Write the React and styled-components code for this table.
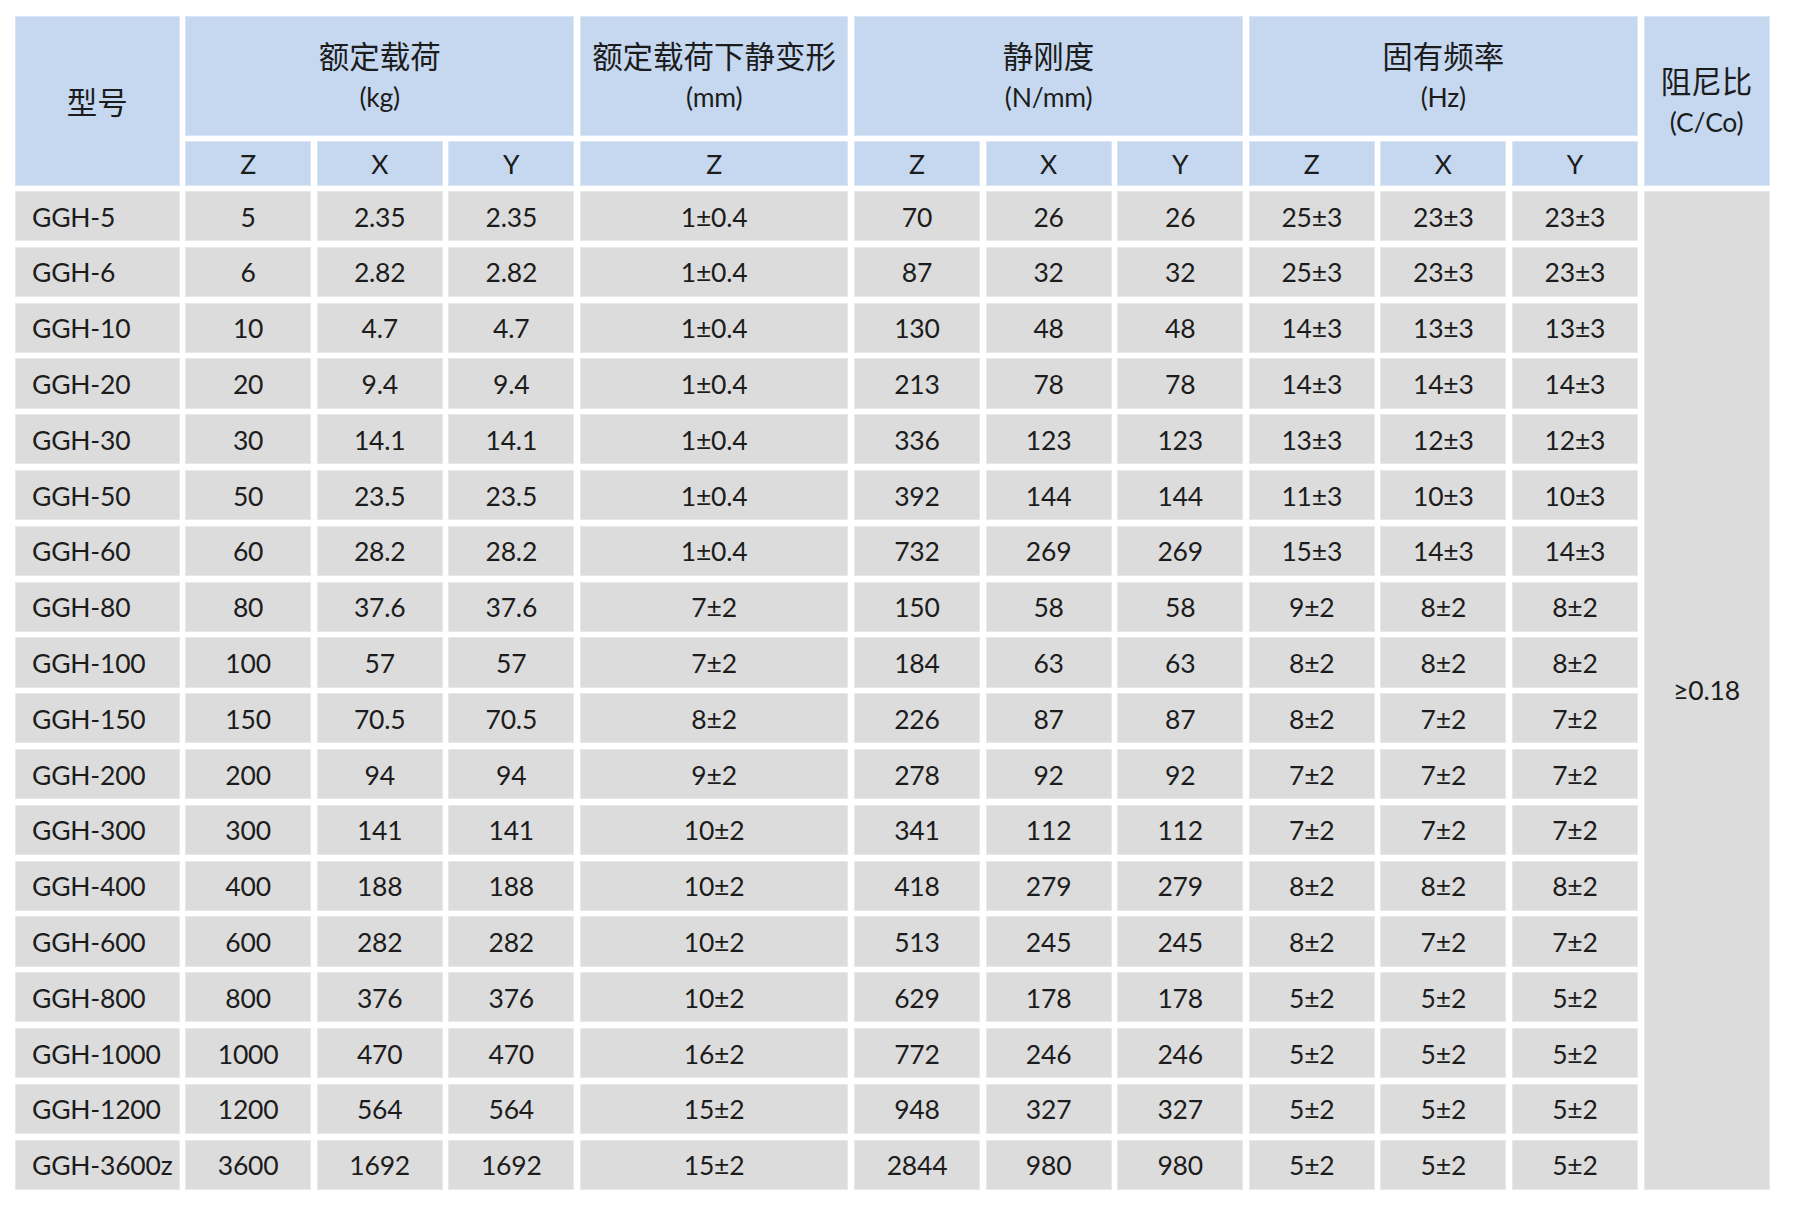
import React from "react";
import styled, { createGlobalStyle } from "styled-components";

const Global = createGlobalStyle`
  html, body { margin: 0; padding: 0; background: #ffffff; }
  body { font-family: "Lato", "Noto Sans CJK SC", sans-serif; color: #1c1c1c; }
`;

const Page = styled.div`
  padding: 16px 0 0 15px;
  width: 1796px;
  height: 1227px;
  box-sizing: border-box;
`;

const Table = styled.div`
  display: grid;
  grid-template-columns: 164.5px repeat(3, 126px) 268.5px repeat(7, 126px);
  grid-template-rows: 119.5px 44.5px repeat(18, 50.3px);
  gap: 5.5px 5.6px;
  width: max-content;
`;

const Cell = styled.div`
  display: flex;
  align-items: center;
  justify-content: center;
  box-sizing: border-box;
  box-shadow: inset 0 0 0 1px rgba(255, 255, 255, 0.35);
  font-family: "Lato", "Noto Sans CJK SC", sans-serif;
  font-size: 26.5px;
  letter-spacing: -0.2px;
  color: #1c1c1c;
  white-space: nowrap;
`;

const HeadCell = styled(Cell)`
  background: #c6d8f0;
  flex-direction: column;
  grid-column: ${(p) => p.$col || "auto"};
  grid-row: ${(p) => p.$row || "auto"};
`;

const SubCell = styled(Cell)`
  background: #c6d8f0;
  padding-top: 2px;
`;

const BodyCell = styled(Cell)`
  background: #dcdcdc;
  padding-top: 1px;
`;

const ModelCell = styled(BodyCell)`
  justify-content: flex-start;
  padding-left: 17px;
`;

const DampCell = styled(BodyCell)`
  grid-column: 12;
  grid-row: 3 / span 18;
  padding-top: 0;
`;

const Title = styled.span`
  font-family: "Noto Sans CJK SC", sans-serif;
  font-size: 30.5px;
  letter-spacing: 0;
  line-height: 42px;
`;

const Unit = styled.span`
  font-family: "Lato", "Noto Sans CJK SC", sans-serif;
  font-size: 26.5px;
  line-height: 42px;
`;

const rows = [
  ["GGH-5", "5", "2.35", "2.35", "1±0.4", "70", "26", "26", "25±3", "23±3", "23±3"],
  ["GGH-6", "6", "2.82", "2.82", "1±0.4", "87", "32", "32", "25±3", "23±3", "23±3"],
  ["GGH-10", "10", "4.7", "4.7", "1±0.4", "130", "48", "48", "14±3", "13±3", "13±3"],
  ["GGH-20", "20", "9.4", "9.4", "1±0.4", "213", "78", "78", "14±3", "14±3", "14±3"],
  ["GGH-30", "30", "14.1", "14.1", "1±0.4", "336", "123", "123", "13±3", "12±3", "12±3"],
  ["GGH-50", "50", "23.5", "23.5", "1±0.4", "392", "144", "144", "11±3", "10±3", "10±3"],
  ["GGH-60", "60", "28.2", "28.2", "1±0.4", "732", "269", "269", "15±3", "14±3", "14±3"],
  ["GGH-80", "80", "37.6", "37.6", "7±2", "150", "58", "58", "9±2", "8±2", "8±2"],
  ["GGH-100", "100", "57", "57", "7±2", "184", "63", "63", "8±2", "8±2", "8±2"],
  ["GGH-150", "150", "70.5", "70.5", "8±2", "226", "87", "87", "8±2", "7±2", "7±2"],
  ["GGH-200", "200", "94", "94", "9±2", "278", "92", "92", "7±2", "7±2", "7±2"],
  ["GGH-300", "300", "141", "141", "10±2", "341", "112", "112", "7±2", "7±2", "7±2"],
  ["GGH-400", "400", "188", "188", "10±2", "418", "279", "279", "8±2", "8±2", "8±2"],
  ["GGH-600", "600", "282", "282", "10±2", "513", "245", "245", "8±2", "7±2", "7±2"],
  ["GGH-800", "800", "376", "376", "10±2", "629", "178", "178", "5±2", "5±2", "5±2"],
  ["GGH-1000", "1000", "470", "470", "16±2", "772", "246", "246", "5±2", "5±2", "5±2"],
  ["GGH-1200", "1200", "564", "564", "15±2", "948", "327", "327", "5±2", "5±2", "5±2"],
  ["GGH-3600z", "3600", "1692", "1692", "15±2", "2844", "980", "980", "5±2", "5±2", "5±2"],
];

const subHeads = ["Z", "X", "Y", "Z", "Z", "X", "Y", "Z", "X", "Y"];

export default function App() {
  return (
    <>
      <Global />
      <Page>
        <Table>
          <HeadCell $col="1" $row="1 / span 2">
            <Title>型号</Title>
          </HeadCell>
          <HeadCell $col="2 / span 3" $row="1">
            <Title>额定载荷</Title>
            <Unit>(kg)</Unit>
          </HeadCell>
          <HeadCell $col="5" $row="1">
            <Title>额定载荷下静变形</Title>
            <Unit>(mm)</Unit>
          </HeadCell>
          <HeadCell $col="6 / span 3" $row="1">
            <Title>静刚度</Title>
            <Unit>(N/mm)</Unit>
          </HeadCell>
          <HeadCell $col="9 / span 3" $row="1">
            <Title>固有频率</Title>
            <Unit>(Hz)</Unit>
          </HeadCell>
          <HeadCell $col="12" $row="1 / span 2">
            <Title>阻尼比</Title>
            <Unit>(C/Co)</Unit>
          </HeadCell>
          {subHeads.map((s, i) => (
            <SubCell key={"s" + i}>{s}</SubCell>
          ))}
          {rows.map((r, ri) => (
            <React.Fragment key={"r" + ri}>
              <ModelCell>{r[0]}</ModelCell>
              {r.slice(1).map((v, ci) => (
                <BodyCell key={ci}>{v}</BodyCell>
              ))}
              {ri === 0 && <DampCell>≥0.18</DampCell>}
            </React.Fragment>
          ))}
        </Table>
      </Page>
    </>
  );
}
